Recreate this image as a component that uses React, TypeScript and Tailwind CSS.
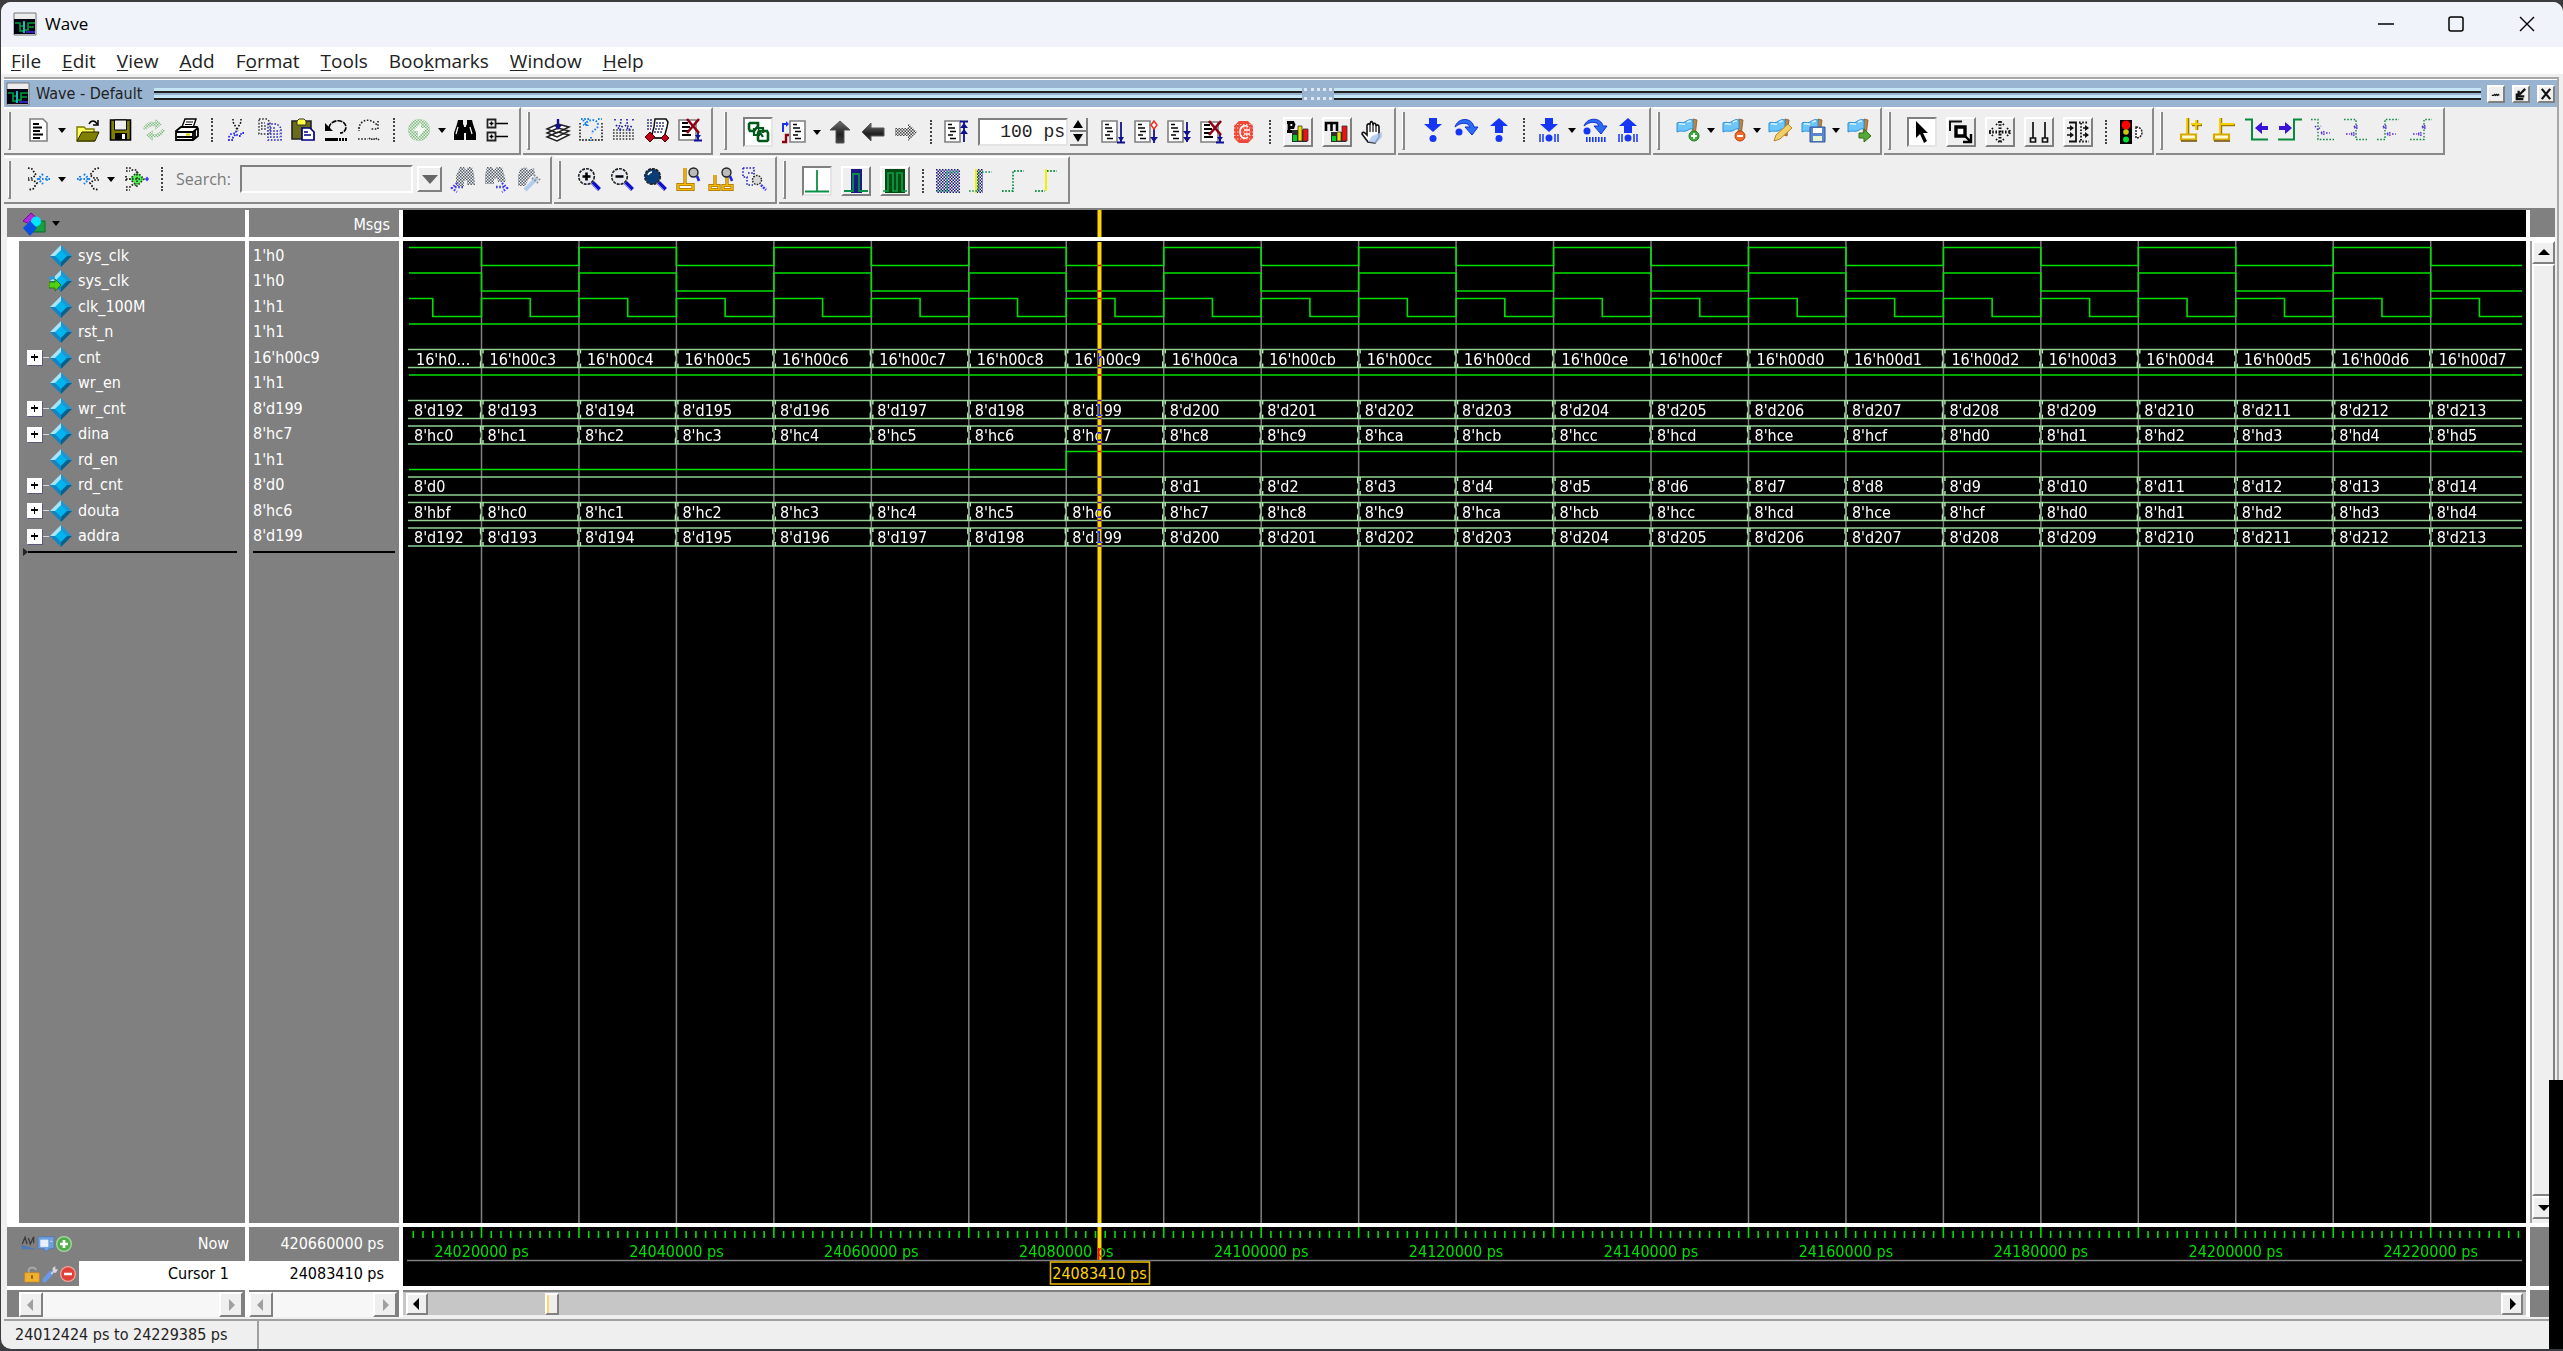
import type { ReactNode } from "react";

const TAHOMA = "font-['DejaVu_Sans_Condensed','DejaVu_Sans',sans-serif]";
const SEGOE = "font-['Open_Sans','Noto_Sans',sans-serif]";

/* ---------- icons ---------- */

const DOT = { strokeDasharray: "1.6 1.6", fill: "none" };

const page = (
  <>
    <path d="M3 1h13l4 4v18H3z" fill="#fff" stroke="#808080" strokeWidth="1.6" />
    <path d="M6 6h6M6 9.5h9M6 13h7M6 16.5h10M6 20h7" stroke="#000" strokeWidth="1.8" />
  </>
);

const smallPage = (
  <>
    <path d="M1 1h15v21H1z" fill="#fff" stroke="#808080" strokeWidth="1.6" />
    <path d="M4 4.5h4M4 8h7M6 11.5h6M4 15h5M6 18.5h6" stroke="#000" strokeWidth="1.7" />
  </>
);

const flag = (
  <>
    <path d="M17 1l4 1-2 16-3-1z" fill="#b98545" stroke="#8a5a22" strokeWidth=".8" />
    <path d="M1 5c3-2 5 1 8-1s5-3 8-2v9c-3-1-4 1-7 2s-6-1-9 1z" fill="#6cc5fb" stroke="#2c8fd6" />
    <path d="M3 6c3-1 4 1 6 0M11 4c2-1 3-1 4-1" stroke="#d8f2ff" strokeWidth="1.4" fill="none" />
  </>
);

const lens = (fill: string) => (
  <>
    <circle cx="9.5" cy="9.5" r="7.8" fill={fill} stroke="#222" strokeWidth="1.6" strokeDasharray="3 1" />
    <path d="M15.5 15.5l7 7" stroke="#1010c8" strokeWidth="4" />
    <path d="M14.5 16.5l7 7" stroke="#8080ff" strokeWidth="1" />
  </>
);

const ICONS: Record<string, ReactNode> = {
  wave: (
    <>
      <path d="M1 1h22v22H1z" fill="#ececec" stroke="#777" />
      <path d="M1 7h21v15H1z" fill="#001" />
      <path d="M2 11h5v8h4M7 14h4v-4M11 18h4v-7h7M15 15h6" stroke="#00a040" strokeWidth="1.6" fill="none" />
      <path d="M11 9v12" stroke="#10c8c8" strokeWidth="1.8" />
      <path d="M13 20h9" stroke="#3020c0" strokeWidth="1.8" />
    </>
  ),
  new: page,
  open: (
    <>
      <path d="M1 9h7l2 2h8v12H1z" fill="#ffff60" stroke="#7a7a00" strokeWidth="1.4" />
      <path d="M1 23l5-9h17l-4 9z" fill="#808000" stroke="#222200" />
      <path d="M13 6c2-4 6-4 8 0M22 2v5h-5" stroke="#000" strokeWidth="1.5" fill="none" />
    </>
  ),
  save: (
    <>
      <path d="M1.500 2h20v20h-20z" fill="#808000" stroke="#000" strokeWidth="1.6" />
      <path d="M5.500 2h12v10h-12z" fill="#efefef" stroke="#000" />
      <path d="M6 15h12v7H6z" fill="#000" />
      <path d="M13 16h3v5h-3z" fill="#fff" />
    </>
  ),
  refresh: (
    <>
      <path d="M1 11c2-6 7-8 12-7V1l7 5-7 6V8c-4 0-7 1-9 4z" fill="url(#dg)" />
      <path d="M23 12c-2 6-7 8-12 7v4l-7-6 7-5v4c4 0 7-1 9-5z" fill="url(#dg)" />
    </>
  ),
  print: (
    <>
      <path d="M7 9l3-8h11l-3 9" fill="#fff" stroke="#000" strokeWidth="1.4" />
      <path d="M11 4h7M10 6.500h7" stroke="#000" strokeWidth="1.2" />
      <path d="M1 13l5-4h16l1 2v7l-5 4H1z" fill="#fff" stroke="#000" strokeWidth="1.8" />
      <path d="M1 14h17v8M18 14l5-4M2 19h16M20 13v8" stroke="#000" strokeWidth="1.8" fill="none" />
      <path d="M11 16.500h4" stroke="#d8c800" strokeWidth="2" />
    </>
  ),
  cut: (
    <>
      <path d="M8 1v3l5 9M16 1v3l-5 9" stroke="#111" strokeWidth="1.6" {...DOT} />
      <path d="M11 13v2l-5 1-2 3v3h4v-3l3-3 2 2h3v-3h4" stroke="#2222f0" strokeWidth="1.8" {...DOT} />
    </>
  ),
  copy: (
    <>
      <path d="M1 1h8l3 3v12H1zM3 5h4M3 8h6M3 11h6" stroke="#333" strokeWidth="1.4" {...DOT} />
      <path d="M10 6h9l4 4v12H10zM12 10h5M12 13h10M12 16h10M12 19h10" stroke="#2222c0" strokeWidth="1.5" {...DOT} />
    </>
  ),
  paste: (
    <>
      <path d="M1 3h19v18H1z" fill="#6b6b1a" stroke="#222" strokeWidth="1.6" />
      <path d="M6 3l2-2h5l2 2v4H6z" fill="#ffff40" stroke="#333" />
      <path d="M11 10h8l4 4v8H11z" fill="#fff" stroke="#000080" strokeWidth="1.7" />
      <path d="M13 14h4M13 17h7" stroke="#000080" strokeWidth="1.5" />
    </>
  ),
  undo: (
    <>
      <path d="M5 10C6 1 21 0 22 9c0 4-3 6-6 6" stroke="#000" strokeWidth="1.7" strokeDasharray="5 1" fill="none" />
      <path d="M1 5v8h8z" fill="#000" />
      <path d="M1 21.500h13" stroke="#000" strokeWidth="3" />
      <path d="M15 21.500h8" stroke="#000" strokeWidth="3" strokeDasharray="2 1" />
    </>
  ),
  redo: (
    <>
      <path d="M2 11c0-8 10-13 18-4M21 3v8h-8M2 9v4" stroke="#222" strokeWidth="1.600" {...DOT} />
      <path d="M1 21h10M12 20l2 2 2-2 2 2 2-2 2 2" stroke="#222" strokeWidth="1.600" {...DOT} />
    </>
  ),
  compile: (
    <>
      <circle cx="12" cy="12" r="11" fill="url(#dg)" />
      <path d="M14 5l-8 8h5v6l8-9h-5z" fill="#fff" opacity=".85" />
    </>
  ),
  find: (
    <>
      <path d="M5 2h5v4l1 2v14H1v-7l3-9zM14 2h5l1 4 3 9v7H13V8l1-2z" fill="#000" />
      <path d="M10 9h4v6h-4z" fill="#000" />
      <path d="M5 9l-2 7M17 9l2 7" stroke="#fff" strokeWidth="1.2" />
    </>
  ),
  tree: (
    <>
      <path d="M1.500 1.500h8v8h-8zM1.500 14.500h8v8h-8z" fill="#fff" stroke="#222" strokeWidth="1.800" />
      <path d="M3.500 5.500h4M5.500 3.500v4M3.500 18.500h4M5.500 16.500v4M10 5.500h12M10 18.500h12" stroke="#000" strokeWidth="1.600" />
    </>
  ),
  layers: (
    <>
      <path d="M1 19l11-5 11 3-12 6zM1 15l11-5 11 3-12 6zM1 11l11-5 11 3-12 6z" fill="#fff" stroke="#222" strokeWidth="1.500" />
      <path d="M12 1v8" stroke="#101090" strokeWidth="2.400" />
      <path d="M8 7h8l-4 5z" fill="#101090" />
    </>
  ),
  help: (
    <>
      <path d="M1 5v17h22V5M3 22h20" stroke="#111" strokeWidth="1.500" {...DOT} />
      <path d="M6 7c1-6 13-7 13 0 0 5-6 4-6 9M12 19v4M4 2l4 5h-4M2 1h8M19 1h4" stroke="#1680f0" strokeWidth="2" {...DOT} />
    </>
  ),
  gridDown: (
    <>
      <path d="M1 12h22M1 15h22M1 18h22M1 21h22" stroke="#333" strokeWidth="1.500" {...DOT} />
      <path d="M3 1v3M9 1v3l-2 5M15 1v3l1 5M21 1v3M4 7l4 5 3-5M13 7l4 5 3-5" stroke="#2222a8" strokeWidth="1.700" {...DOT} />
    </>
  ),
  script: (
    <>
      <path d="M10 1h11l2 3-1 5-3 11H6l3-11z" fill="#fff" stroke="#111" strokeWidth="1.500" />
      <path d="M11 5h9M11 8h8M10 11h8M9 14h8M2 2h6M2 5h5M2 8h5M2 11h4" stroke="#3a3a80" strokeWidth="1.300" strokeDasharray="2 1" />
      <path d="M5 14l5 5-5 5-5-5z" fill="#c00018" stroke="#500" />
      <path d="M20 16l4 4-4 4-4-4z" fill="#c00018" stroke="#500" />
      <path d="M9 20h7" stroke="#222" strokeWidth="1.500" />
    </>
  ),
  endSim: (
    <>
      <path d="M1 2h17v20H1z" fill="#fff" stroke="#808080" strokeWidth="1.600" />
      <path d="M4 5h6M4 9h8M4 13h6M4 17h9" stroke="#000" strokeWidth="1.800" />
      <path d="M20 13v9M16 22.500h8" stroke="#1010a0" strokeWidth="1.800" />
      <path d="M17 17h6l-3 4z" fill="#1010a0" />
      <path d="M9 1l12 14M21 1L9 15" stroke="#900010" strokeWidth="2.600" />
    </>
  ),
  link: (
    <>
      <path d="M4 3h8v3l-4 5H4L3 9V4zM13 11h8l1 2v7l-1 1h-8l-1-1v-7z" stroke="#005a1a" strokeWidth="2.600" fill="none" />
      <path d="M12 4v4h5v5M8 8v7h5v-4l4 6" stroke="#005a1a" strokeWidth="2.200" fill="none" />
    </>
  ),
  context: (
    <>
      <g transform="translate(7 0)">{smallPage}</g>
      <path d="M1 12V4h3" stroke="#1a30f0" strokeWidth="2" fill="none" />
      <path d="M4 1l3 3-3 3z" fill="#1a30f0" />
      <path d="M0 22h4v-7h3" stroke="#900010" strokeWidth="2.400" fill="none" />
    </>
  ),
  up: <path d="M12 1l10 9h-6v13H8V10H2z" fill="url(#ink)" stroke="#555" />,
  left: <path d="M1 12l9-9v5h13v8H10v5z" fill="url(#ink)" stroke="#555" />,
  right: <path d="M23 12l-9-9v5H1v8h13v5z" fill="url(#dk)" />,
  restart: (
    <>
      {smallPage}
      <path d="M20 2v20M16 1.500h8" stroke="#101090" strokeWidth="1.800" />
      <path d="M16 8h8l-4-5zM16 14h8l-4-5z" fill="#101090" />
    </>
  ),
  run: (
    <>
      {smallPage}
      <path d="M20 2v20M16 22.500h8" stroke="#101090" strokeWidth="1.800" />
      <path d="M17 17h6l-3 5z" fill="#101090" />
    </>
  ),
  continue: (
    <>
      {smallPage}
      <path d="M20 9v14" stroke="#101090" strokeWidth="1.800" />
      <path d="M16 17h8l-4 5z" fill="#101090" />
      <path d="M20 1l3 4-3 4-3-4z" fill="#fff" stroke="#f03020" strokeWidth="1.500" />
    </>
  ),
  runAll: (
    <>
      {smallPage}
      <path d="M20 2v20" stroke="#101090" strokeWidth="1.800" />
      <path d="M16 11h8l-4 5zM16 17h8l-4 5z" fill="#101090" />
    </>
  ),
  stop: (
    <>
      <path d="M6 1h9l5 5v12l-5 5H6l-5-5V6z" fill="#f04838" />
      <path d="M1 4.500h20M1 8h20M1 12h20M1 15.500h20M1 19h20" stroke="#f8c8c0" strokeWidth="1" strokeDasharray="1.500 1.500" />
      <path d="M15 7c-2-2-8-2-8 5s6 7 8 5M11 10h6M11 14h6" stroke="#fff" strokeWidth="1.600" fill="none" />
    </>
  ),
  profile: (
    <>
      <path d="M6 22V10h15v12z" fill="#303030" />
      <path d="M7 15h4v6H7z" fill="#00d020" />
      <path d="M12 6h4v15h-4z" fill="#f0e000" stroke="#333" strokeWidth=".8" />
      <path d="M17 9h5v12h-5z" fill="#f01010" stroke="#333" strokeWidth=".8" />
      <path d="M3 1v11M1 2.500h6l1 2-1 3H3M1 11.500h5" stroke="#000" strokeWidth="2.800" fill="none" />
    </>
  ),
  memory: (
    <>
      <path d="M6 22V12h15v10z" fill="#303030" />
      <path d="M7 16h4v5H7z" fill="#00d020" />
      <path d="M12 12h4v9h-4z" fill="#f0e000" stroke="#333" strokeWidth=".8" />
      <path d="M17 6h5v15h-5z" fill="#f01010" stroke="#333" strokeWidth=".8" />
      <path d="M1 11V3h11v8M6.500 3v8" stroke="#000" strokeWidth="2.600" fill="none" />
    </>
  ),
  hand: (
    <>
      <path d="M7 22l-6-8c0-2 2-2 3-1l2 2V5c1-2 3-1 3 0 0-5 3-4 3 0 1-3 3-2 3 1 1-2 3-1 3 1v10l-4 6z" fill="#fff" stroke="#111" strokeWidth="1.600" />
      <path d="M9 5v7M12 5v7M15 6v6" stroke="#222" strokeWidth="1.300" />
      <path d="M7 22l4-6 10-4v5l-6 6z" fill="#a9c5f0" opacity=".8" />
    </>
  ),
  stepIn: (
    <>
      <path d="M8 0h8v6h5l-9 8-9-8h5z" fill="#1636f5" />
      <circle cx="12" cy="20.500" r="3.500" fill="#1636f5" />
    </>
  ),
  stepOver: (
    <>
      <path d="M1 9C4-1 18-1 20 9h4l-6 8-7-8h5C14 4 7 4 1 9z" fill="#2a6cf5" stroke="#1030d0" />
      <circle cx="5" cy="14" r="3.500" fill="#1636f5" />
    </>
  ),
  stepOut: (
    <>
      <path d="M8 15h8V8h5l-9-8-9 8h5z" fill="#1636f5" />
      <circle cx="12" cy="20.500" r="3.500" fill="#1636f5" />
    </>
  ),
  stepInCur: (
    <>
      <path d="M8 0h8v6h5l-9 8-9-8h5z" fill="#1636f5" />
      <circle cx="12" cy="20" r="3.500" fill="#1636f5" />
      <path d="M3 16v8M6 16v8M18 16v8M21 16v8" stroke="#1636f5" strokeWidth="1.500" />
    </>
  ),
  stepOverCur: (
    <>
      <path d="M1 8C4-1 18-1 20 8h4l-6 8-7-8h5C14 3 7 3 1 8z" fill="#2a6cf5" stroke="#1030d0" />
      <circle cx="4" cy="13" r="3.500" fill="#1636f5" />
      <path d="M3 21.500h21" stroke="#1636f5" strokeWidth="5" strokeDasharray="1.600 1.400" />
    </>
  ),
  stepOutCur: (
    <>
      <path d="M8 15h8V8h5l-9-8-9 8h5z" fill="#1636f5" />
      <circle cx="12" cy="20" r="3.500" fill="#1636f5" />
      <path d="M3 16v8M6 16v8M18 16v8M21 16v8" stroke="#1636f5" strokeWidth="1.500" />
    </>
  ),
  flagAdd: (
    <>
      {flag}
      <circle cx="18" cy="18" r="5" fill="#3fae3a" stroke="#1d7a1c" />
      <path d="M15 18h6M18 15v6" stroke="#fff" strokeWidth="2" />
    </>
  ),
  flagRemove: (
    <>
      {flag}
      <circle cx="18" cy="18" r="5" fill="#f06a28" stroke="#c03a08" />
      <path d="M15 18h6" stroke="#fff" strokeWidth="2" />
    </>
  ),
  flagEdit: (
    <>
      {flag}
      <path d="M6 23l2-6L20 6l4 4-12 11z" fill="#f3cf68" stroke="#b8862a" />
    </>
  ),
  flagSave: (
    <>
      {flag}
      <path d="M9 9h15v15H9z" fill="#5b86cf" stroke="#2f57a0" />
      <path d="M12 10h9v5h-9z" fill="#fff" />
      <path d="M12 18h9v5h-9z" fill="#e8f5d0" />
    </>
  ),
  flagGo: (
    <>
      {flag}
      <path d="M12 15h5v-4l7 7-7 6v-4h-5z" fill="#58a83a" stroke="#2d7018" />
    </>
  ),
  pointer: <path d="M6 1l12 12h-5l4 8-3 2-4-9-4 4z" fill="#000" />,
  zoomMode: (
    <>
      <path d="M1 11V1.500h12" stroke="#111" strokeWidth="2" fill="none" />
      <path d="M7 7h9v9H7z" fill="#fff" stroke="#000" strokeWidth="3.400" />
      <path d="M15 15l7 7M22 14v8h-8" stroke="#000" strokeWidth="2.400" fill="none" />
    </>
  ),
  panMode: (
    <>
      <path d="M12 1v22M1 12h22" stroke="#111" strokeWidth="3" {...DOT} />
      <path d="M8 5l4-4 4 4M8 19l4 4 4-4M5 8l-4 4 4 4M19 8l4 4-4 4" stroke="#111" strokeWidth="1.700" {...DOT} />
    </>
  ),
  twoCursor: (
    <path d="M6 2v16M18 2v16M3.500 18h5v4h-5zM15.500 18h5v4h-5z" stroke="#111" strokeWidth="1.700" fill="none" />
  ),
  editMode: (
    <>
      <path d="M3 2.500h7v19H3" stroke="#111" strokeWidth="1.800" fill="none" />
      <path d="M13 2.500h9M15 3v19M13 21.500h10" stroke="#111" strokeWidth="1.800" {...DOT} />
      <path d="M1 8h5M1 15h5M17 8h5M17 15h5" stroke="#111" strokeWidth="1.600" />
      <path d="M4 5l4 3-4 3zM4 12l4 3-4 3zM19 5v6l4-3zM19 12v6l4-3z" fill="#111" />
    </>
  ),
  traffic: (
    <>
      <path d="M1 0h12v24H1z" fill="#000" />
      <circle cx="7" cy="5" r="4.500" fill="#f00" />
      <circle cx="7" cy="12" r="2.800" fill="#c8c800" />
      <circle cx="7" cy="19.500" r="3" fill="#00e030" />
      <path d="M17 7c8 0 8 11 0 11z" stroke="#222" strokeWidth="1.500" strokeDasharray="2 1" fill="#fff" />
    </>
  ),
  cursorAdd: (
    <>
      <path d="M9 0v16M13 7h10M18 2v10" stroke="#a07800" strokeWidth="2.600" fill="none" />
      <path d="M8 0v16M12 6h10M17 2v10" stroke="#f5d000" strokeWidth="1.800" fill="none" />
      <path d="M2 16.500h15v5H2z" fill="#ffffd0" stroke="#d8a800" strokeWidth="2.200" />
      <path d="M2 23h16" stroke="#6b5000" strokeWidth="1.400" />
    </>
  ),
  cursorDel: (
    <>
      <path d="M9 0v16M9 7h14" stroke="#a07800" strokeWidth="2.400" fill="none" />
      <path d="M8 0v16M9 6h13" stroke="#f5d000" strokeWidth="1.800" fill="none" />
      <path d="M2 16.500h15v5H2z" fill="#ffffd0" stroke="#d8a800" strokeWidth="2.200" />
      <path d="M2 23h16" stroke="#6b5000" strokeWidth="1.400" />
    </>
  ),
  prevEdge: (
    <>
      <path d="M0 1.500h7v20h16" stroke="#088a3c" strokeWidth="2" fill="none" />
      <path d="M10 10l7-6v4h6v4h-6v4z" fill="#3a12d8" />
    </>
  ),
  nextEdge: (
    <>
      <path d="M0 21.500h16v-20h8" stroke="#088a3c" strokeWidth="2" fill="none" />
      <path d="M14 10L7 4v4H1v4h6v4z" fill="#3a12d8" />
    </>
  ),
  fallPrev: (
    <>
      <path d="M0 1.500h7v20h16" stroke="#108a44" strokeWidth="1.400" {...DOT} />
      <path d="M4 8l3 4 3-4M10 15l2-2 2 2-2 2zM15 15h4" stroke="#5a28e0" strokeWidth="1.400" {...DOT} />
    </>
  ),
  fallNext: (
    <>
      <path d="M0 1.500h12v20h11" stroke="#108a44" strokeWidth="1.400" {...DOT} />
      <path d="M10 9l2-2 2 2-2 2zM7 16l2-2 2 2-2 2zM2 16h4" stroke="#5a28e0" strokeWidth="1.400" {...DOT} />
    </>
  ),
  risePrev: (
    <>
      <path d="M0 21.500h8v-20h14" stroke="#108a44" strokeWidth="1.400" {...DOT} />
      <path d="M6 9l2-2 2 2-2 2zM10 16l2-2 2 2-2 2zM15 16h4" stroke="#5a28e0" strokeWidth="1.400" {...DOT} />
    </>
  ),
  riseNext: (
    <>
      <path d="M0 21.500h14v-20h8" stroke="#108a44" strokeWidth="1.400" {...DOT} />
      <path d="M12 9l2-2 2 2-2 2zM8 16l2-2 2 2-2 2zM3 16h4" stroke="#5a28e0" strokeWidth="1.400" {...DOT} />
    </>
  ),
  expandPrev: (
    <>
      <path d="M1 1l4 1 4 6-4 3H1M1 13h5l4 3-4 6-5 1" stroke="#111" strokeWidth="1.700" {...DOT} />
      <path d="M23 12H12M16 7l-5 5 5 5M20 9v6" stroke="#1680f0" strokeWidth="2.200" {...DOT} />
    </>
  ),
  expandNext: (
    <>
      <path d="M23 1l-4 1-5 6 4 3h5M23 13h-5l-4 3 4 6 5 1" stroke="#111" strokeWidth="1.700" {...DOT} />
      <path d="M1 12h11M8 7l5 5-5 5M4 9v6" stroke="#1680f0" strokeWidth="2.200" {...DOT} />
    </>
  ),
  expandAll: (
    <>
      <path d="M1 1h4l2 2h6M1 4h4M1 9v6M1 12h6M1 20h4l2-2h6M1 23h4" stroke="#111" strokeWidth="1.700" {...DOT} />
      <path d="M12 5l7 7-7 7-7-7z" fill="#50f050" stroke="#333" strokeWidth="1.700" strokeDasharray="1.600 1.600" />
      <path d="M12 7v10M7 12h10" stroke="#222" strokeWidth="1.500" {...DOT} />
      <path d="M22 9.500l2 2.500-2 2.500-2-2.500z" fill="#3a3af5" />
    </>
  ),
  findPrev: (
    <>
      <path d="M9 0h4l2 3 2-3h4l2 7 1 11h-8v-5l-3 1v5H5V9z" fill="url(#ds)" />
      <path d="M12 20H4M6 16l-5 5 5 4" stroke="#3a3af5" strokeWidth="2.400" {...DOT} />
    </>
  ),
  findNext: (
    <>
      <path d="M3 0h5l2 3 3-3h5l2 7 2 8h-8l-1-4-3 1v5H1V8z" fill="url(#ds)" />
      <path d="M12 20h9M18 16l5 5-5 4" stroke="#3a3af5" strokeWidth="2.400" {...DOT} />
    </>
  ),
  findOpts: (
    <>
      <path d="M3 2l6-2 2 3 6-2 1 6-6 4-4 8H1V9z" fill="url(#ds)" />
      <path d="M8 23l12-12" stroke="#b4ccec" strokeWidth="4" />
      <path d="M17 8l6 5M15 11l6 5" stroke="#888" strokeWidth="2" {...DOT} />
    </>
  ),
  zoomIn: (
    <>
      {lens("#e8eaf0")}
      <path d="M5.500 9.500h8M9.500 5.500v8" stroke="#000" strokeWidth="2.600" />
    </>
  ),
  zoomOut: (
    <>
      {lens("#e8eaf0")}
      <path d="M5.500 9.500h8" stroke="#000" strokeWidth="2.600" />
    </>
  ),
  zoomFull: (
    <>
      {lens("#0a3c78")}
      <path d="M5 8c1-2 2-3 4-3" stroke="#fff" strokeWidth="1.600" fill="none" />
    </>
  ),
  zoomCursor: (
    <>
      <path d="M9 1v16M2 17.500h15v5H2z" stroke="#a86c00" strokeWidth="3.200" fill="#fff" />
      <path d="M9 1v16M2 17.500h15v5H2z" stroke="#f5c000" strokeWidth="1.600" fill="none" />
      <circle cx="17.500" cy="5.500" r="4.500" fill="#bbb" stroke="#222" strokeWidth="1.400" />
      <path d="M21 9l2 5" stroke="#2222e8" strokeWidth="2.600" />
    </>
  ),
  zoomBetween: (
    <>
      <path d="M6 8v10M1 18.500h9v4H1zM18 8v10M14 18.500h9v4h-9z" stroke="#a86c00" strokeWidth="3.200" fill="#fff" />
      <path d="M6 8v10M1 18.500h9v4H1zM18 8v10M14 18.500h9v4h-9z" stroke="#f5c000" strokeWidth="1.600" fill="none" />
      <circle cx="17.500" cy="5.500" r="4.500" fill="#bbb" stroke="#222" strokeWidth="1.400" />
      <path d="M21 9l2 5" stroke="#2222e8" strokeWidth="2.600" />
    </>
  ),
  zoomArea: (
    <>
      <path d="M1 1h11v10M1 1v9h4v8h6M6 6h6" stroke="#2222b8" strokeWidth="1.600" {...DOT} />
      <circle cx="15" cy="13" r="4.500" fill="#d8d8d8" stroke="#222" strokeWidth="1.400" strokeDasharray="1.600 1.200" />
      <path d="M19 18l5 5" stroke="#3a3af5" strokeWidth="2.600" strokeDasharray="2 1" />
    </>
  ),
  lineDraw: <path d="M12 1v21M0 22.500h24" stroke="#089048" strokeWidth="1.800" />,
  blockDraw: (
    <>
      <path d="M7 0h11v24H7z" fill="#1a1a80" />
      <path d="M0 22h9V5h6v17h9" stroke="#089048" strokeWidth="1.800" fill="none" />
    </>
  ),
  busyDraw: (
    <>
      <path d="M2 0h20v24H2z" fill="#004c10" />
      <path d="M0 22h5V4h5v18h4V4h5v18h5" stroke="#10a048" strokeWidth="1.600" fill="none" />
    </>
  ),
  stripeFull: (
    <>
      <path d="M0 0h24v24H0z" fill="url(#dn)" />
      <path d="M1 22h10V3h12" stroke="#20b060" strokeWidth="1.600" {...DOT} />
    </>
  ),
  stripeHalf: (
    <>
      <path d="M8 0h6v24H8z" fill="url(#dn)" />
      <path d="M7 0v24" stroke="#f0f000" strokeWidth="2" />
      <path d="M0 22h9V3h14" stroke="#109048" strokeWidth="1.600" {...DOT} />
    </>
  ),
  edgeDots: <path d="M0 22h11V2h11" stroke="#109048" strokeWidth="1.800" {...DOT} />,
  edgeYellow: (
    <>
      <path d="M11 0v22" stroke="#f0f000" strokeWidth="2" />
      <path d="M0 22h10M12 2h10" stroke="#109048" strokeWidth="1.800" {...DOT} />
    </>
  ),
  objects: (
    <>
      <path d="M1 9l8-8 7 6-6 6z" fill="#b428d8" stroke="#701090" />
      <path d="M13 9h10v11H11z" fill="#18a040" stroke="#0a6a28" />
      <circle cx="14" cy="9.500" r="5" fill="#00e4ff" />
      <path d="M8 9l7 7-7 8-7-8z" fill="#0a50e0" />
    </>
  ),
  text: (
    <>
      <path d="M2 12l4-10 3 10M11 3l3 9 5-11v10" stroke="#3c3c3c" strokeWidth="2" fill="none" />
      <path d="M1 13l22 7H1z" fill="#4a78b8" />
    </>
  ),
  notes: (
    <>
      <path d="M0 1h24v18h-7l-5 5-3-5H0z" fill="#6f9fdc" stroke="#4872b0" />
      <path d="M4 6h11v10H4zM18 8h4" fill="#e8f0ff" stroke="#e8f0ff" />
    </>
  ),
  add: (
    <>
      <circle cx="12" cy="12" r="11" fill="#4fae4a" stroke="#a8d8a0" strokeWidth="2" />
      <path d="M6 12h12M12 6v12" stroke="#fff" strokeWidth="4" />
    </>
  ),
  lock: (
    <>
      <path d="M7 11V7c0-6 10-6 11-1" stroke="#aaa" strokeWidth="2.600" fill="none" />
      <path d="M1 10h22v14H1z" fill="#f0b030" stroke="#c88410" />
      <path d="M12 14v5" stroke="#7a5000" strokeWidth="2.400" />
    </>
  ),
  wrench: (
    <>
      <path d="M4 21l9-10" stroke="#6a98e8" strokeWidth="7" strokeLinecap="round" />
      <path d="M13 11l3-3V3l4-3v5h4l-3 5h-4l-2 3z" fill="#d4d8e0" />
    </>
  ),
  remove: (
    <>
      <circle cx="12" cy="12" r="11" fill="#e04038" stroke="#f0a098" strokeWidth="2" />
      <path d="M6 12h12" stroke="#fff" strokeWidth="4" />
    </>
  ),
};

function Icon({ name, className = "size-6" }: { name: string; className?: string }) {
  return (
    <svg viewBox="0 0 24 24" className={`${className} shrink-0 overflow-visible`} aria-hidden="true">
      {ICONS[name]}
    </svg>
  );
}

function Patterns() {
  const pats: [string, string][] = [
    ["dg", "#7cbc7c"],
    ["dk", "#444444"],
    ["ds", "#55606c"],
    ["dn", "#1a1a80"],
  ];
  return (
    <svg className="absolute size-0" aria-hidden="true">
      <defs>
        {pats.map(([id, c]) => (
          <pattern key={id} id={id} width="3" height="3" patternUnits="userSpaceOnUse">
            <path d="M0 0h1.500v1.500H0zM1.500 1.500H3V3H1.500z" fill={c} />
          </pattern>
        ))}
        <linearGradient id="ink" x1="0" y1="0" x2="0" y2="1">
          <stop offset="0" stopColor="#707070" />
          <stop offset=".6" stopColor="#202020" />
          <stop offset="1" stopColor="#404040" />
        </linearGradient>
      </defs>
    </svg>
  );
}

/* ---------- toolbars ---------- */

type Item = string | ReactNode;

// "|" separator, "v" caret, "*x" pressed, "+x" raised, anything else a flat icon button
function Tool({ item }: { item: string }) {
  if (item === "|")
    return (
      <span className="flex w-[17px] shrink-0 justify-center">
        <span className="h-6 border-l-2 border-dotted border-[#444]" />
      </span>
    );
  if (item === "v")
    return (
      <button aria-label="more" className="flex w-[13px] shrink-0 justify-center">
        <span className="border-x-4 border-t-[5px] border-x-transparent border-t-black" />
      </button>
    );
  if (item[0] === "*" || item[0] === "+") {
    const look =
      item[0] === "*"
        ? "bg-white border-t-[#808080] border-l-[#808080] border-r-[#e4e4e4] border-b-[#e4e4e4]"
        : "bg-[#efefef] border-t-white border-l-white border-r-[#808080] border-b-[#808080]";
    return (
      <span className="flex w-[39px] shrink-0 justify-center">
        <button aria-label={item.slice(1)} className={`flex size-[30px] items-center justify-center border-2 ${look}`}>
          <Icon name={item.slice(1)} />
        </button>
      </span>
    );
  }
  return (
    <button aria-label={item} className="flex w-[33px] shrink-0 justify-center">
      <Icon name={item} />
    </button>
  );
}

function Toolbar({ items, tall, className = "" }: { items: Item[]; tall?: boolean; className?: string }) {
  return (
    <div
      className={`flex h-full shrink-0 border-t-2 border-r-2 border-b-2 border-t-white border-r-[#8a8a8a] border-b-[#8a8a8a] pr-[5px] ${className}`}
    >
      <span className="my-[3px] mr-[11px] ml-1 w-[3px] border-r-2 border-b-2 border-l border-l-white border-r-[#8a8a8a] border-b-[#8a8a8a]" />
      <div className={`flex items-center ${tall ? "pt-0.5" : "pb-0.5"}`}>
        {items.map((item, i) => (typeof item === "string" ? <Tool key={i} item={item} /> : <span key={i} className="flex items-center">{item}</span>))}
      </div>
    </div>
  );
}

const gap = <span className="w-[3px]" />;

const stepField = (
  <>
    <input
      aria-label="Run length"
      defaultValue="100 ps"
      className="ml-1.5 h-7 w-[90px] border-2 border-t-[#808080] border-r-[#e4e4e4] border-b-[#e4e4e4] border-l-[#808080] bg-white pr-px text-right font-['Liberation_Mono',monospace] text-lg text-[#222] outline-none"
    />
    <span className="mr-2 ml-0.5 flex h-7 w-[18px] flex-col">
      <button aria-label="Increase" className="flex flex-1 items-center justify-center border-r-2 border-b-2 border-[#808080]">
        <span className="border-x-[5px] border-b-[8px] border-x-transparent border-b-black" />
      </button>
      <button aria-label="Decrease" className="flex flex-1 items-center justify-center border-r-2 border-b-2 border-[#808080]">
        <span className="border-x-[5px] border-t-[8px] border-x-transparent border-t-black" />
      </button>
    </span>
  </>
);

const searchField = (
  <>
    <label htmlFor="search" className={`ml-1.5 w-[64px] text-base text-[#7a7a7a] ${SEGOE}`}>
      Search:
    </label>
    <input
      id="search"
      className="h-7 w-[173px] border-2 border-t-[#808080] border-r-white border-b-white border-l-[#808080] bg-[#efefef] px-1 outline-none"
    />
    <button
      aria-label="Search history"
      className="mr-1 ml-1 flex h-[26px] w-[25px] items-center justify-center border-2 border-t-white border-r-[#808080] border-b-[#808080] border-l-white"
    >
      <span className="border-x-8 border-t-[9px] border-x-transparent border-t-[#666]" />
    </button>
  </>
);

const ROW_ONE: { items: Item[]; tall?: boolean; className?: string }[] = [
  {
    items: [
      "new", "v", gap, "open", "save", "refresh", "print", "|", "cut", "copy", "paste", "undo", "redo", "|",
      "compile", "v", "find", "tree",
    ],
  },
  { items: ["layers", "help", "gridDown", "script", "endSim"] },
  {
    tall: true,
    className: "ml-[5px]",
    items: [
      "*link", "context", "v", "up", "left", "right", "|", "restart", stepField, "run", "continue", "runAll", "endSim", "stop",
      "|", "+profile", "+memory", "hand",
    ],
  },
  { items: ["stepIn", "stepOver", "stepOut", "|", "stepInCur", "v", "stepOverCur", "stepOutCur"] },
  { items: ["flagAdd", "v", "flagRemove", "v", "flagEdit", "flagSave", "v", "flagGo"] },
  { tall: true, items: ["*pointer", "+zoomMode", "+panMode", "+twoCursor", "+editMode", "|", "traffic"] },
  { items: ["cursorAdd", "cursorDel", "prevEdge", "nextEdge", "fallPrev", "fallNext", "risePrev", "riseNext"] },
];

const ROW_TWO: { items: Item[]; tall?: boolean; className?: string }[] = [
  {
    items: ["expandPrev", "v", gap, "expandNext", "v", gap, "expandAll", "|", searchField, "findPrev", "findNext", "findOpts"],
  },
  { items: ["zoomIn", "zoomOut", "zoomFull", "zoomCursor", "zoomBetween", "zoomArea"] },
  { tall: true, items: ["*lineDraw", "+blockDraw", "+busyDraw", "|", "stripeFull", "stripeHalf", "edgeDots", "edgeYellow"] },
];

/* ---------- signals ---------- */

type Signal = {
  name: string;
  value: string;
  kind: "clk" | "clk2x" | "high" | "rise" | "bus";
  port?: boolean;
  // label of the segment starting at grid step k (k = -1 is the clipped first one)
  label?: (k: number) => string | null;
};

const hex = (n: number) => n.toString(16);

const SIGNALS: Signal[] = [
  { name: "sys_clk", value: "1'h0", kind: "clk" },
  { name: "sys_clk", value: "1'h0", kind: "clk", port: true },
  { name: "clk_100M", value: "1'h1", kind: "clk2x" },
  { name: "rst_n", value: "1'h1", kind: "high" },
  { name: "cnt", value: "16'h00c9", kind: "bus", label: (k) => (k < 0 ? "16'h0..." : `16'h00${hex(0xc3 + k)}`) },
  { name: "wr_en", value: "1'h1", kind: "high" },
  { name: "wr_cnt", value: "8'd199", kind: "bus", label: (k) => `8'd${193 + k}` },
  { name: "dina", value: "8'hc7", kind: "bus", label: (k) => `8'h${hex(0xc1 + k)}` },
  { name: "rd_en", value: "1'h1", kind: "rise" },
  { name: "rd_cnt", value: "8'd0", kind: "bus", label: (k) => (k < 0 ? "8'd0" : k < 7 ? null : `8'd${k - 6}`) },
  { name: "douta", value: "8'hc6", kind: "bus", label: (k) => `8'h${hex(0xc0 + k)}` },
  { name: "addra", value: "8'd199", kind: "bus", label: (k) => `8'd${193 + k}` },
];

const STEP = 97.46;
const START = 6;
const END = 2119;
const gx = (k: number) => 78.5 + k * STEP;
const CURSOR = gx(6.341);
const STEPS = Array.from({ length: 21 }, (_, k) => k);

function tracePath(kind: Signal["kind"], hi: number) {
  const lo = hi + 18;
  if (kind === "high") return `M${START} ${hi}H${END}`;
  if (kind === "rise") return `M${START} ${lo}H${gx(6)}V${hi}H${END}`;
  if (kind === "clk") return `M${START} ${hi}` + STEPS.map((k) => `H${gx(k)}V${k % 2 ? hi : lo}`).join("") + `H${END}`;
  return (
    `M${START} ${hi}H${gx(-0.5)}V${lo}` +
    STEPS.map((k) => `H${gx(k)}V${hi}H${Math.min(gx(k + 0.5), END)}V${lo}`).join("") +
    `H${END}`
  );
}

function Bus({ hi, label }: { hi: number; label: (k: number) => string | null }) {
  const lo = hi + 18;
  return (
    <g>
      <path d={`M${START - 1} ${hi}H${END}M${START - 1} ${lo}H${END}`} stroke="#8fd08f" strokeWidth="1.5" />
      {[-1, ...STEPS].map((k) => {
        const text = label(k);
        if (text === null) return null;
        const x = gx(k);
        return (
          <g key={k}>
            {k >= 0 && (
              <>
                <path
                  d={`M${x - 1} ${hi}v5l1 2M${x + 1.5} ${hi}v4M${x - 1} ${lo}v-5l1 -2M${x + 1.5} ${lo}v-4`}
                  stroke="#b0f0b0"
                  strokeWidth="1.4"
                  fill="none"
                />
                <path d={`M${x} ${hi + 5}v8`} stroke="#8fb08f" strokeWidth="1.6" />
              </>
            )}
            <text x={k < 0 ? (text.startsWith("16") ? 13 : 11) : x + (text.startsWith("16") ? 8 : 6)} y={hi + 15} fill="#fff">
              {text}
            </text>
          </g>
        );
      })}
    </g>
  );
}

function Waves() {
  return (
    <svg className={`isolate block size-full bg-black text-base ${TAHOMA}`} role="img" aria-label="Waveforms">
      {STEPS.map((k) => (
        <line key={k} x1={gx(k)} x2={gx(k)} y1="0" y2="100%" stroke="#808080" strokeWidth="1.5" />
      ))}
      {SIGNALS.map((s, i) => {
        const hi = 6.5 + i * 25.5;
        return s.kind === "bus" ? (
          <Bus key={i} hi={hi} label={s.label!} />
        ) : (
          <path key={i} d={tracePath(s.kind, hi)} stroke="#00e000" strokeWidth="1.6" fill="none" />
        );
      })}
      <rect x={CURSOR - 2} width="4" y="1" height="100%" fill="#ffd400" className="mix-blend-difference" />
    </svg>
  );
}

function Timeline() {
  return (
    <svg className={`isolate block size-full bg-black text-base ${TAHOMA}`} role="img" aria-label="Timeline">
      {Array.from({ length: 217 }, (_, i) => i - 7).map((i) => {
        const x = gx(i / 10);
        const major = i % 10 === 0;
        return <line key={i} x1={x} x2={x} y1={major ? 0 : 4} y2="11" stroke="#00e000" strokeWidth="1.6" />;
      })}
      {STEPS.filter((k) => k % 2 === 0).map((k) => (
        <text key={k} x={gx(k)} y="30" textAnchor="middle" fill="#00e000">
          {24020000 + k * 10000} ps
        </text>
      ))}
      <path d={`M4 33.500H${END}`} stroke="#808080" strokeWidth="1.600" />
      <rect x={CURSOR - 2} width="4" y="0" height="33" fill="#ffd400" className="mix-blend-difference" />
      <rect x={CURSOR - 49} y="35" width="99" height="22" fill="#000" stroke="#e0b400" strokeWidth="1.600" />
      <text x={CURSOR} y="52" textAnchor="middle" fill="#ffd400">
        24083410 ps
      </text>
    </svg>
  );
}

function Diamond({ port }: { port?: boolean }) {
  return (
    <svg viewBox="0 0 24 24" className="size-6 shrink-0" aria-hidden="true">
      <path d="M12 1L1 12h11z" fill="#a8e4fa" />
      <path d="M12 1l11 11H12z" fill="#1e96d2" />
      <path d="M1 12l11 11V12z" fill="#1484c0" />
      <path d="M23 12L12 23V12z" fill="#08608c" />
      <path d="M12 6l6 6-6 6-6-6z" fill="#00b4f0" />
      {port && (
        <>
          <path d="M0 9h6" stroke="#2a9ad8" strokeWidth="3" />
          <path d="M0 13h6v-3l6 6-6 6v-3H0z" fill="#50d010" stroke="#1a6a00" strokeWidth=".8" />
        </>
      )}
    </svg>
  );
}

/* ---------- panes ---------- */

const PANE_LEFT = "w-[238px] shrink-0";
const PANE_MSGS = "w-[150px] shrink-0";
const EDGE = "w-[25px] shrink-0";
const BEVEL = "border-2 border-t-white border-l-white border-r-[#808080] border-b-[#808080] bg-[#efefef]";

function Arrow({ dir, dim }: { dir: "left" | "right" | "up" | "down"; dim?: boolean }) {
  const d = { left: "M9 1v12L3 7z", right: "M5 1v12l6-6z", up: "M1 9h12L7 3z", down: "M1 4h12l-6 6z" }[dir];
  return (
    <svg viewBox="0 0 14 14" className="size-3.5" aria-hidden="true">
      <path d={d} fill={dim ? "#a0a0a0" : "#000"} />
    </svg>
  );
}

function SmallScroll() {
  return (
    <div className="flex h-full flex-1 border-t-2 border-r-2 border-t-[#808080] border-r-[#808080] bg-[#f7f7f7]">
      <button aria-label="Scroll left" className={`flex w-6 items-center justify-center ${BEVEL}`}>
        <Arrow dir="left" dim />
      </button>
      <span className="flex-1" />
      <button aria-label="Scroll right" className={`flex w-6 items-center justify-center ${BEVEL}`}>
        <Arrow dir="right" dim />
      </button>
    </div>
  );
}

function SignalNames() {
  return (
    <div className={`flex bg-white pl-3 ${PANE_LEFT}`}>
      <div className="flex-1 bg-[#808080] pt-0.5">
        <ul className="grid h-[306px] grid-rows-12 text-base text-white">
          {SIGNALS.map((s, i) => (
            <li key={i} className="flex min-h-0 items-center pl-2">
              {s.kind === "bus" ? (
                <>
                  <button
                    aria-label={`Expand ${s.name}`}
                    className="relative size-[15px] shrink-0 bg-white shadow-[1px_1px_0_#5a5a78] before:absolute before:inset-x-[4px] before:top-[6px] before:h-[2px] before:bg-black after:absolute after:inset-y-[4px] after:left-[7px] after:w-px after:bg-black"
                  />
                  <span className="h-px w-[7px] bg-[#d8d8d8]" />
                </>
              ) : (
                <span className="w-[22px]" />
              )}
              <Diamond port={s.port} />
              <span className="ml-[5px]">{s.name}</span>
            </li>
          ))}
        </ul>
        <div className="mt-0.5 mr-2 ml-1 flex h-0.5 items-center">
          <span className="border-y-4 border-l-[5px] border-y-transparent border-l-[#222]" />
          <span className="h-0.5 flex-1 bg-black" />
        </div>
      </div>
    </div>
  );
}

export default function App() {
  return (
    <div className="relative flex h-screen flex-col overflow-hidden border-b-2 border-[#3a3a42] bg-[#3c3c3e] pt-0.5 pl-px">
      <Patterns />
      <div className="flex min-h-0 flex-1 flex-col overflow-hidden rounded-t-[10px] rounded-bl-[10px] bg-[#efefef]">
        <header className="flex h-[45px] shrink-0 items-center bg-[#f0f3fa] pb-0.5 pl-3">
          <Icon name="wave" />
          <h1 className={`ml-2 flex-1 text-[17px] text-black ${SEGOE}`}>Wave</h1>
          <button aria-label="Minimize" className="flex w-[70px] justify-center">
            <svg viewBox="0 0 16 16" className="size-4" stroke="#000" strokeWidth="1.400"><path d="M0 8h16" /></svg>
          </button>
          <button aria-label="Maximize" className="flex w-[70px] justify-center">
            <svg viewBox="0 0 16 16" className="size-4" stroke="#000" strokeWidth="1.500" fill="none"><rect x="1" y="1" width="14" height="14" rx="2" /></svg>
          </button>
          <button aria-label="Close" className="flex w-[72px] justify-center">
            <svg viewBox="0 0 16 16" className="size-4" stroke="#000" strokeWidth="1.400"><path d="M1 1l14 14M15 1L1 15" /></svg>
          </button>
        </header>

        <nav className={`flex h-[27px] shrink-0 items-center gap-[21px] bg-white pl-2.5 text-[19px] leading-6 text-[#222] ${SEGOE}`}>
          {[
            ["", "F", "ile"],
            ["", "E", "dit"],
            ["", "V", "iew"],
            ["", "A", "dd"],
            ["F", "o", "rmat"],
            ["", "T", "ools"],
            ["Boo", "k", "marks"],
            ["", "W", "indow"],
            ["", "H", "elp"],
          ].map(([a, b, c]) => (
            <button key={a + b + c}>
              {a}
              <span className="underline underline-offset-2">{b}</span>
              {c}
            </button>
          ))}
        </nav>

        <div className="mt-[3px] mr-1 ml-[3px] flex min-h-0 flex-1 flex-col border-t-2 border-r-2 border-t-[#a8a8a8] border-r-[#a8a8a8]">
          {/* docked window caption */}
          <div className="flex h-7 shrink-0 items-center border-t border-white bg-[#99b4d1] pr-0.5 pl-0.5">
            <Icon name="wave" className="size-6" />
            <h2 className={`mr-3 ml-1.5 text-base text-[#222] ${TAHOMA}`}>Wave - Default</h2>
            <Stripes />
            <span className="mx-0.5 h-3 w-7 border-y-[3px] border-dotted border-[#dfe8f2]" />
            <Stripes />
            <div className="ml-1.5 flex gap-[7px]">
              {["M3 9h2l1-1 1 1 1-1 1 1 1-1 1 1", "M12 2L6 8M5 4v6h6M3 7v6h7", "M3 2l9 11M12 2L3 13"].map((d, i) => (
                <button key={i} aria-label={["Minimize pane", "Undock pane", "Close pane"][i]} className={`flex size-[18px] items-center justify-center ${BEVEL}`}>
                  <svg viewBox="0 0 15 15" className="size-3.5 shrink-0" fill="none" stroke="#111" strokeWidth={i ? 2.4 : 1.4}>
                    <path d={d} />
                  </svg>
                </button>
              ))}
            </div>
          </div>

          <div className="flex h-12 shrink-0 gap-0.5">
            {ROW_ONE.map((bar, i) => (
              <Toolbar key={i} {...bar} />
            ))}
          </div>
          <div className="mt-px flex h-12 shrink-0 gap-0.5">
            {ROW_TWO.map((bar, i) => (
              <Toolbar key={i} {...bar} />
            ))}
          </div>

          <main className={`mt-1 mr-0.5 ml-[3px] flex min-h-0 flex-1 flex-col border-t-2 border-[#808080] bg-white ${TAHOMA}`}>
            <div className="flex h-[27px] shrink-0 gap-1 text-base text-white">
              <div className={`flex items-center bg-[#808080] pl-[15px] ${PANE_LEFT}`}>
                <Icon name="objects" />
                <button aria-label="Column menu" className="ml-1.5">
                  <span className="block border-x-4 border-t-[5px] border-x-transparent border-t-black" />
                </button>
              </div>
              <div className={`bg-[#808080] pr-[9px] text-right leading-[30px] ${PANE_MSGS}`}>Msgs</div>
              <div className="min-w-0 flex-1 bg-black">
                <svg className="block size-full" aria-hidden="true">
                  <rect x={CURSOR - 2} width="4" height="100%" fill="#ffd400" />
                </svg>
              </div>
              <div className={`bg-[#808080] ${EDGE}`} />
            </div>

            <div className="mt-1 flex min-h-0 flex-1 gap-1">
              <SignalNames />
              <div className={`bg-[#808080] pt-0.5 ${PANE_MSGS}`}>
                <ul className="grid h-[306px] grid-rows-12 text-base text-white">
                  {SIGNALS.map((s, i) => (
                    <li key={i} className="flex min-h-0 items-center pl-1">
                      {s.value}
                    </li>
                  ))}
                </ul>
                <div className="mx-1 mt-0.5 h-0.5 bg-black" />
              </div>
              <div className="min-w-0 flex-1 overflow-hidden">
                <Waves />
              </div>
              <div className={`flex flex-col border-l-2 border-[#a0a0a0] bg-[#efefef] pb-1 ${EDGE}`}>
                <button aria-label="Scroll up" className={`flex h-[23px] shrink-0 items-center justify-center ${BEVEL}`}>
                  <Arrow dir="up" />
                </button>
                <span className={`flex-1 ${BEVEL}`} />
                <button aria-label="Scroll down" className={`flex h-[23px] shrink-0 items-center justify-center ${BEVEL}`}>
                  <Arrow dir="down" />
                </button>
              </div>
            </div>

            <div className="mt-1 flex h-[59px] shrink-0 gap-1 text-base">
              <div className={`flex flex-col bg-[#808080] ${PANE_LEFT}`}>
                <div className="flex flex-1 items-center gap-px pr-4 pl-3.5 text-white">
                  <Icon name="text" className="size-4" />
                  <Icon name="notes" className="size-4" />
                  <Icon name="add" className="ml-px size-4" />
                  <span className="flex-1 text-right">Now</span>
                </div>
                <div className="flex h-[25px] items-center text-black">
                  <span className="flex w-[72px] items-center gap-0.5 pl-[17px]">
                    <Icon name="lock" className="size-4" />
                    <Icon name="wrench" className="size-4" />
                    <Icon name="remove" className="size-4" />
                  </span>
                  <span className="flex-1 bg-white pr-4 text-right leading-[25px]">Cursor 1</span>
                </div>
              </div>
              <div className={`flex flex-col bg-[#808080] text-right text-white ${PANE_MSGS}`}>
                <div className="flex-1 pr-[15px] leading-[34px]">420660000 ps</div>
                <div className="h-[25px] bg-white pr-[15px] leading-[25px] text-black">24083410 ps</div>
              </div>
              <div className="min-w-0 flex-1 overflow-hidden">
                <Timeline />
              </div>
              <div className={`bg-[#808080] ${EDGE}`} />
            </div>

            <div className="mt-1 flex h-[27px] shrink-0 gap-1">
              <div className={`flex bg-[#808080] pl-3 ${PANE_LEFT}`}>
                <SmallScroll />
              </div>
              <div className={`flex ${PANE_MSGS}`}>
                <SmallScroll />
              </div>
              <div className="flex min-w-0 flex-1 items-center border-t-2 border-b-2 border-t-[#808080] border-b-[#efefef] bg-[#c6c6c6] px-[3px]">
                <button aria-label="Scroll left" className={`flex h-[22px] w-[22px] items-center justify-center ${BEVEL}`}>
                  <Arrow dir="left" />
                </button>
                <span className="flex flex-1">
                  <span className={`ml-[117px] h-[22px] w-3.5 ${BEVEL}`}>
                    <span className="block h-full w-0.5 bg-[#ffd860]" />
                  </span>
                </span>
                <button aria-label="Scroll right" className={`flex h-[22px] w-[22px] items-center justify-center ${BEVEL}`}>
                  <Arrow dir="right" />
                </button>
              </div>
              <div className={`bg-[#808080] ${EDGE}`} />
            </div>
          </main>

          <footer className={`mt-0.5 flex h-[30px] shrink-0 items-center border-t-2 border-[#a0a0a0] text-base text-[#222] ${TAHOMA}`}>
            <span className="flex h-full w-[255px] items-center border-r-2 border-[#a0a0a0] pl-[11px]">24012424 ps to 24229385 ps</span>
          </footer>
        </div>
      </div>
      <div className="absolute right-0 bottom-0 h-[269px] w-3.5 bg-black" />
    </div>
  );
}

function Stripes() {
  return (
    <span className="flex h-3 flex-1 flex-col justify-between">
      <span className="h-[5px] border-t-[3px] border-b-2 border-t-[#c4e6f4] border-b-[#222]" />
      <span className="h-[5px] border-t-[3px] border-b-2 border-t-[#c4e6f4] border-b-[#222]" />
    </span>
  );
}
